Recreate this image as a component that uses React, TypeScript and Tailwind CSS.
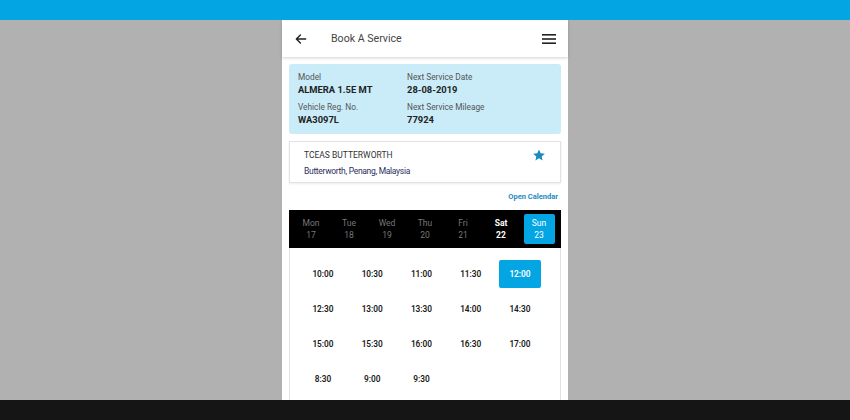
import React from "react";

const days = [
  { d: "Mon", n: 17, state: "past" },
  { d: "Tue", n: 18, state: "past" },
  { d: "Wed", n: 19, state: "past" },
  { d: "Thu", n: 20, state: "past" },
  { d: "Fri", n: 21, state: "past" },
  { d: "Sat", n: 22, state: "open" },
  { d: "Sun", n: 23, state: "selected" },
];

const times = [
  "10:00", "10:30", "11:00", "11:30", "12:00",
  "12:30", "13:00", "13:30", "14:00", "14:30",
  "15:00", "15:30", "16:00", "16:30", "17:00",
  "8:30", "9:00", "9:30",
];

const InfoField = ({ label, value }: { label: string; value: string }) => (
  <div className="flex flex-col">
    <span className="text-[8.3px] leading-[12px] text-[#555]">{label}</span>
    <span className="text-[9.4px] leading-[14px] font-bold text-[#222]">{value}</span>
  </div>
);

export default function App() {
  const selectedTime = "12:00";

  return (
    <div className="flex flex-col h-[420px] w-full font-['Roboto',sans-serif] overflow-hidden">
      <div className="h-[20px] bg-[#03a5e3] shrink-0" />

      <div className="flex-1 bg-[#b1b1b1] flex justify-center overflow-hidden">
        <div className="w-[286px] bg-white flex flex-col">
          {/* Header */}
          <div className="h-[37px] shrink-0 flex items-center px-[12px] shadow-[0_1px_3px_rgba(0,0,0,0.18)] relative z-10">
            <svg width="14" height="14" viewBox="0 0 24 24" fill="none" stroke="#222" strokeWidth="2.4" strokeLinecap="round" strokeLinejoin="round">
              <path d="M20 12H4M11 5l-7 7 7 7" />
            </svg>
            <span className="ml-[23px] text-[10.6px] text-[#444]">Book A Service</span>
            <svg className="ml-auto" width="14" height="12" viewBox="0 0 14 12">
              <rect x="0" y="1" width="14" height="1.6" fill="#222" />
              <rect x="0" y="5.2" width="14" height="1.6" fill="#222" />
              <rect x="0" y="9.4" width="14" height="1.6" fill="#222" />
            </svg>
          </div>

          <div className="px-[7px] pt-[7px] flex flex-col">
            {/* Vehicle info */}
            <div className="h-[70px] rounded-[3px] bg-[#c9ecf8] pl-[9px] pt-[7px] grid grid-cols-[109px_1fr] gap-y-[4px] content-start">
              <InfoField label="Model" value="ALMERA 1.5E MT" />
              <InfoField label="Next Service Date" value="28-08-2019" />
              <InfoField label="Vehicle Reg. No." value="WA3097L" />
              <InfoField label="Next Service Mileage" value="77924" />
            </div>

            {/* Dealer */}
            <div className="mt-[7px] h-[42px] border border-[#e2e2e2] shadow-[0_1px_2px_rgba(0,0,0,0.08)] flex items-start pl-[14px] pr-[14px] pt-[7px]">
              <div className="flex flex-col">
                <span className="text-[8.5px] leading-[12px] text-[#333]">TCEAS BUTTERWORTH</span>
                <span className="mt-[4px] text-[8.5px] tracking-[-0.3px] leading-[12px] text-[#2b2f5e]">Butterworth, Penang, Malaysia</span>
              </div>
              <svg className="ml-auto mt-[-1px]" width="14" height="14" viewBox="0 0 24 24">
                <path d="M12 2.5l2.9 6.6 7.1.6-5.4 4.7 1.6 7-6.2-3.7-6.2 3.7 1.6-7L2 9.7l7.1-.6z" fill="#1a8ac0" />
              </svg>
            </div>

            <div className="h-[27px] flex items-center justify-end pr-[3px]">
              <span className="text-[7.5px] font-bold text-[#1c8cc0]">Open Calendar</span>
            </div>

            {/* Days */}
            <div className="h-[38px] bg-black grid grid-cols-7 px-[3px] items-center">
              {days.map((day) => (
                <div key={day.d} className="flex justify-center">
                  <div
                    className={
                      day.state === "selected"
                        ? "w-[31px] h-[30px] bg-[#03a5e3] rounded-[2px] flex flex-col items-center justify-center text-white"
                        : day.state === "open"
                        ? "w-[31px] h-[30px] flex flex-col items-center justify-center text-white font-bold"
                        : "w-[31px] h-[30px] flex flex-col items-center justify-center text-[#777]"
                    }
                  >
                    <span className="text-[8.5px] leading-[12px]">{day.d}</span>
                    <span className="text-[8.5px] leading-[12px]">{day.n}</span>
                  </div>
                </div>
              ))}
            </div>

            {/* Times */}
            <div className="border-x border-[#e2e2e2] pl-[12px] pt-[12px] pb-[12px] grid grid-cols-[repeat(5,42px)] gap-x-[7.25px] gap-y-[7px] h-[200px] content-start">
              {times.map((t) => (
                <div
                  key={t}
                  className={
                    t === selectedTime
                      ? "h-[28px] rounded-[2px] bg-[#03a5e3] text-white flex items-center justify-center text-[8.3px] font-semibold"
                      : "h-[28px] flex items-center justify-center text-[8.3px] font-semibold text-[#1a1a1a]"
                  }
                >
                  {t}
                </div>
              ))}
            </div>
          </div>
        </div>
      </div>

      <div className="h-[20px] bg-[#151515] shrink-0" />
    </div>
  );
}
